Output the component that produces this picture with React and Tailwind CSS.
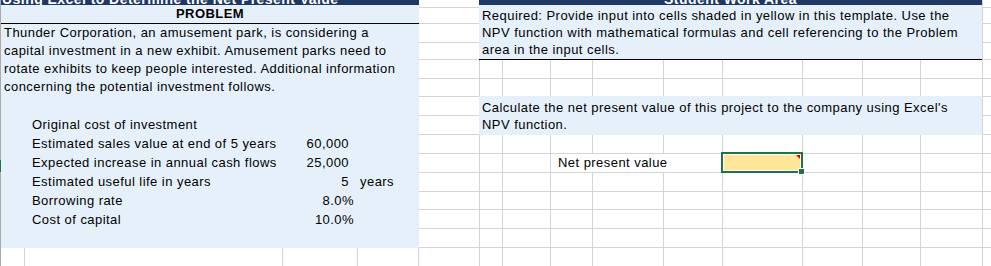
const colWidths = [1, 24, 258, 75, 61, 61, 23, 48, 42, 71, 59, 80, 60, 58, 62, 20];
const rowHeights = [8, 16, 19, 17, 19, 18, 19, 19, 19, 19, 19, 18, 19, 19, 19];

const problemLines = [
  'Thunder Corporation, an amusement park, is considering a',
  'capital investment in a new exhibit. Amusement parks need to',
  'rotate exhibits to keep people interested. Additional information',
  'concerning the potential investment follows.',
];

const facts = [
  { label: 'Original cost of investment' },
  { label: 'Estimated sales value at end of 5 years', value: '60,000', pad: 'pr-[9px]' },
  { label: 'Expected increase in annual cash flows', value: '25,000', pad: 'pr-[9px]' },
  { label: 'Estimated useful life in years', value: '5', pad: 'pr-[9px]', unit: 'years' },
  { label: 'Borrowing rate', value: '8.0%', pad: 'pr-[4px]' },
  { label: 'Cost of capital', value: '10.0%', pad: 'pr-[4px]' },
];

const requiredLines = [
  'Required: Provide input into cells shaded in yellow in this template. Use the',
  'NPV function with mathematical formulas and cell referencing to the Problem',
  'area in the input cells.',
];

const calcLines = [
  "Calculate the net present value of this project to the company using Excel's",
  'NPV function.',
];

function TitleStrip({ children, center }) {
  return (
    <div className={`h-[5px] shrink-0 overflow-hidden bg-[#1f3864] ${center ? 'text-center' : 'pl-px'}`}>
      <div className="-mt-[9px] whitespace-nowrap text-[14px] font-bold leading-[16px] text-white">
        {children}
      </div>
    </div>
  );
}

export default function App() {
  return (
    <div className="grid h-[266px] w-[991px] grid-cols-[1px_24px_258px_75px_61px_61px_23px_48px_42px_71px_59px_80px_60px_58px_62px_20px] grid-rows-[8px_16px_19px_17px_19px_18px_19px_19px_19px_19px_19px_18px_19px_19px_19px] overflow-hidden bg-white font-['Liberation_Sans',Arial,sans-serif] text-[13px] tracking-[0.45px] text-black">
      {/* ── sheet gridlines ── */}
      {rowHeights.map((_, r) =>
        colWidths.slice(1).map((_, c) => (
          <div
            key={`${r}-${c}`}
            style={{ gridRow: r + 1, gridColumn: c + 2 }}
            className="border-b border-r border-[#d4d4d4]"
          />
        ))
      )}

      {/* ── window edge ── */}
      <div className="col-start-1 row-start-1 row-end-16 bg-[#ababab] pt-[160px]">
        <div className="h-[12px] bg-[#217346]" />
      </div>

      {/* ── Problem panel ── */}
      <div className="col-start-2 col-end-6 row-start-1 row-end-15 flex flex-col bg-[#e6f0fa]">
        <TitleStrip>Using Excel to Determine the Net Present Value</TitleStrip>
        <div className="h-[19px] shrink-0 border-b border-black text-center font-bold leading-[18px]">
          PROBLEM
        </div>
        <div className="pl-[3px] leading-[18px]">
          {problemLines.map((line) => (
            <div key={line} className="whitespace-nowrap">{line}</div>
          ))}
        </div>
        <div className="mt-[19px]">
          {facts.map(({ label, value, pad, unit }) => (
            <div key={label} className="flex h-[19px] leading-[19px]">
              <div className="w-[282px] whitespace-nowrap pl-[31px]">{label}</div>
              <div className={`w-[75px] text-right ${pad ?? ''}`}>{value}</div>
              {unit && <div className="pl-[2px]">{unit}</div>}
            </div>
          ))}
        </div>
      </div>

      {/* ── Student work area ── */}
      <div className="col-start-7 col-end-16 row-start-1 row-end-5 -ml-px mr-px flex flex-col">
        <TitleStrip center>Student Work Area</TitleStrip>
        <div className="flex-1 border-b border-black bg-[#e6f0fa] pl-[3px] pt-[2px] leading-[17px]">
          {requiredLines.map((line) => (
            <div key={line} className="whitespace-nowrap">{line}</div>
          ))}
        </div>
      </div>

      <div className="col-start-7 col-end-16 row-start-7 row-end-9 -ml-px -mt-px mr-px bg-[#e6f0fa] pl-[3px] pt-[3px] leading-[17px]">
        {calcLines.map((line) => (
          <div key={line} className="whitespace-nowrap">{line}</div>
        ))}
      </div>

      <div className="col-start-9 col-end-12 row-start-10 row-end-11 mb-px mr-px whitespace-nowrap bg-white pl-[7px] leading-[18px]">
        Net present value
      </div>

      {/* ── active input cell ── */}
      <div className="relative col-start-12 col-end-13 row-start-10 row-end-11 -ml-[2px] -mt-[2px] border-2 border-[#217346] bg-white p-px">
        <div className="relative h-full bg-[#ffe699]">
          <div className="absolute right-0 top-0 h-0 w-0 border-l-[4px] border-t-[4px] border-l-transparent border-t-[#e00000]" />
        </div>
        <div className="absolute -bottom-[4px] -right-[4px] h-[7px] w-[7px] border border-white bg-[#217346]" />
      </div>
    </div>
  );
}
